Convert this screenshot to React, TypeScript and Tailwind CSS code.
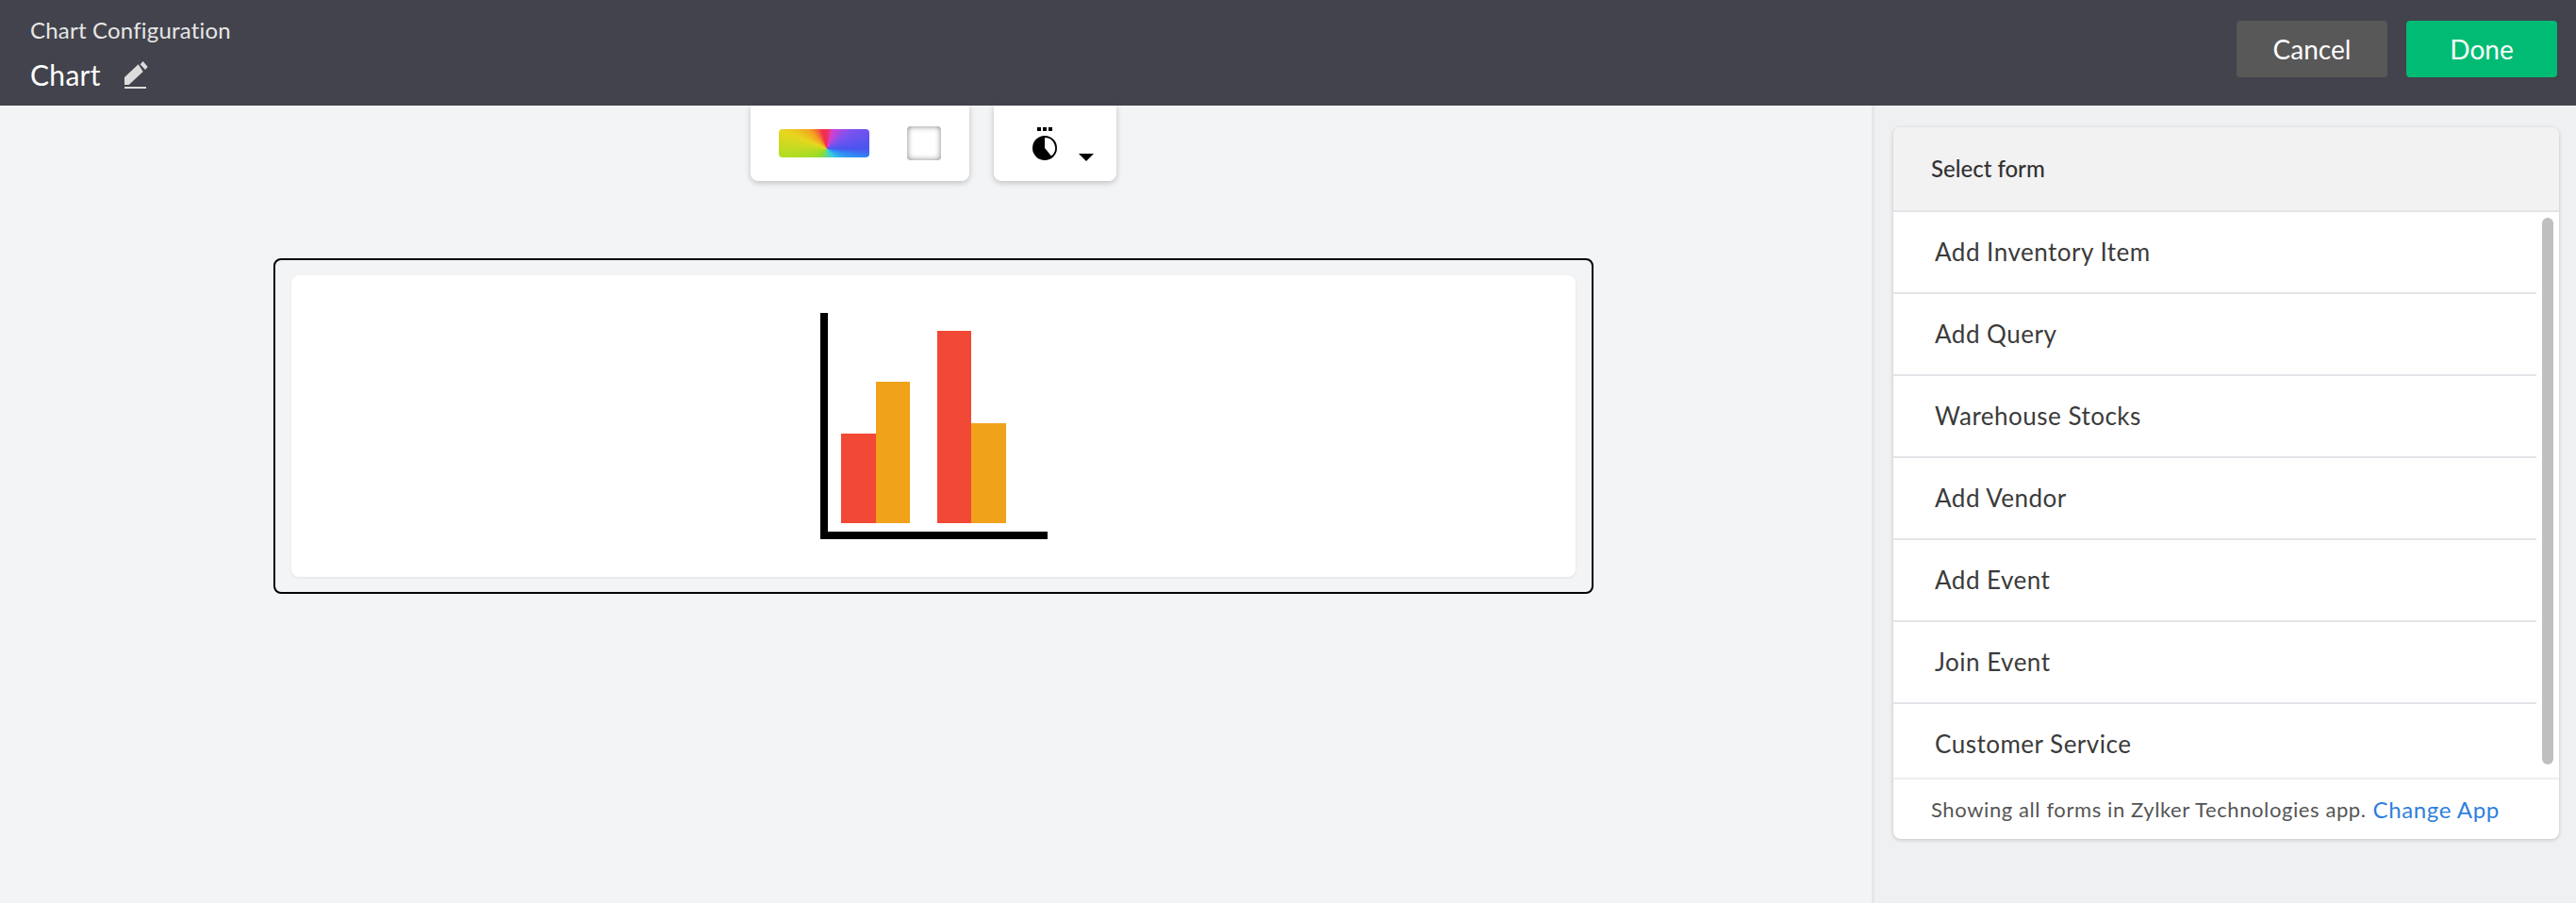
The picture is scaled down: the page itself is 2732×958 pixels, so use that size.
const forms = [
  'Add Inventory Item',
  'Add Query',
  'Warehouse Stocks',
  'Add Vendor',
  'Add Event',
  'Join Event',
  'Customer Service',
]

function PencilIcon() {
  return (
    <svg width="25" height="30" viewBox="0 0 25 30" className="ml-[25px]">
      <path d="M0 26V18L14.7 4.3L19.7 12L4.7 26Z" fill="#dcdcdc" />
      <path d="M19.7 1L24.7 7L22 10L16.7 4.3Z" fill="#dcdcdc" />
      <rect x="0" y="28" width="23" height="2" fill="#dcdcdc" />
    </svg>
  )
}

function PieIcon() {
  return (
    <svg width="30" height="40" viewBox="0 0 30 40">
      <rect x="7" y="2" width="4" height="4" fill="#000" />
      <rect x="13" y="2" width="4" height="4" fill="#000" />
      <rect x="19" y="2" width="4" height="4" fill="#000" />
      <circle cx="15" cy="24" r="13" fill="#000" />
      <path d="M15 24V13A11 11 0 0 1 22 32.5Z" fill="#fff" />
    </svg>
  )
}

function BarChart() {
  return (
    <svg width="241" height="240" viewBox="0 0 241 240">
      <rect x="0" y="0" width="8" height="240" fill="#000" />
      <rect x="0" y="232" width="241" height="8" fill="#000" />
      <rect x="22" y="128" width="37" height="95" fill="#f24936" />
      <rect x="59" y="73" width="36" height="150" fill="#f0a21a" />
      <rect x="124" y="19" width="36" height="204" fill="#f24936" />
      <rect x="160" y="117" width="37" height="106" fill="#f0a21a" />
    </svg>
  )
}

export default function App() {
  return (
    <div className="flex h-[958px] flex-col overflow-hidden bg-[#f3f4f6] font-['Lato','Open_Sans',sans-serif]">
      <header className="flex h-[112px] shrink-0 items-start justify-between bg-[#42434c] pl-8 pr-5">
        <div className="pt-[18px]">
          <p className="text-[24px] leading-[28px] tracking-[0.2px] text-[#e6e6e6]">Chart Configuration</p>
          <div className="mt-[15px] flex h-9 items-center">
            <span className="text-[30px] leading-[36px] tracking-[0.3px] text-white">Chart</span>
            <PencilIcon />
          </div>
        </div>
        <div className="flex gap-5 pt-[22px]">
          <button className="h-[60px] w-40 rounded-[4px] bg-[#585858] text-[28px] text-white">Cancel</button>
          <button className="h-[60px] w-40 rounded-[4px] bg-[#00bb74] text-[28px] text-white">Done</button>
        </div>
      </header>

      <div className="flex min-h-0 flex-1">
        <main className="flex flex-1 flex-col items-center pr-[5px]">
          <div className="flex gap-[26px]">
            <div className="flex h-20 w-[232px] items-center gap-10 rounded-b-lg bg-white pl-[30px] shadow-[0_2px_6px_rgba(0,0,0,0.22)]">
              <div className="h-[30px] w-24 rounded-[4px] bg-[conic-gradient(at_53%_69%,#f0304f_0deg,#d43fd0_18deg,#7c52f0_56deg,#4a55ee_90deg,#2f8cf5_105deg,#36d0e0_142deg,#8fdc30_225deg,#b5dc22_262deg,#e8d61e_292deg,#f59a20_320deg,#f0304f_345deg,#f0304f_360deg)]" />
              <div className="h-9 w-9 rounded-[4px] bg-white shadow-[inset_0_0_6px_rgba(0,0,0,0.5)]" />
            </div>
            <div className="flex h-20 w-[130px] rounded-b-lg bg-white pl-[39px] pt-[21px] shadow-[0_2px_6px_rgba(0,0,0,0.22)]">
              <PieIcon />
              <svg width="16" height="8" viewBox="0 0 16 8" className="ml-[21px] mt-[30px]">
                <path d="M0 0H16L8 8Z" fill="#000" />
              </svg>
            </div>
          </div>

          <div className="mt-[82px] w-[1400px] rounded-lg border-2 border-black px-[17px] py-4">
            <div className="flex h-[320px] items-center justify-center rounded-lg bg-white shadow-[0_1px_3px_rgba(0,0,0,0.08)]">
              <BarChart />
            </div>
          </div>
        </main>

        <aside className="w-[747px] shrink-0 border-l-[3px] border-[#e6e7e9] bg-[#eff0f2] pl-5 pt-[23px]">
          <div className="relative flex h-[755px] w-[706px] flex-col overflow-hidden rounded-lg bg-white shadow-[0_1px_4px_rgba(0,0,0,0.2)]">
            <div className="flex h-[90px] shrink-0 items-center border-b-2 border-[#e3e4e8] bg-[#f2f2f3] pl-10 text-[24px] font-medium text-[#333333]">
              Select form
            </div>
            <ul className="min-h-0 flex-1 overflow-hidden pr-6">
              {forms.map((form) => (
                <li
                  key={form}
                  className="flex h-[87px] items-center border-b-2 border-[#e3e4e8] pl-11 text-[26px] tracking-[0.5px] text-[#3b3b3b]"
                >
                  {form}
                </li>
              ))}
            </ul>
            <div className="flex h-[65px] shrink-0 items-center border-t-2 border-[#eeeeee] pl-10 text-[22px] tracking-[0.6px] text-[#555555]">
              <span>Showing all forms in Zylker Technologies app.</span>
              <a className="ml-[7px] text-[24px] text-[#2f7fdd]">Change App</a>
            </div>
            <div className="absolute right-[6px] top-[96px] h-[580px] w-3 rounded-md bg-[#bfbfbf]" />
          </div>
        </aside>
      </div>
    </div>
  )
}
